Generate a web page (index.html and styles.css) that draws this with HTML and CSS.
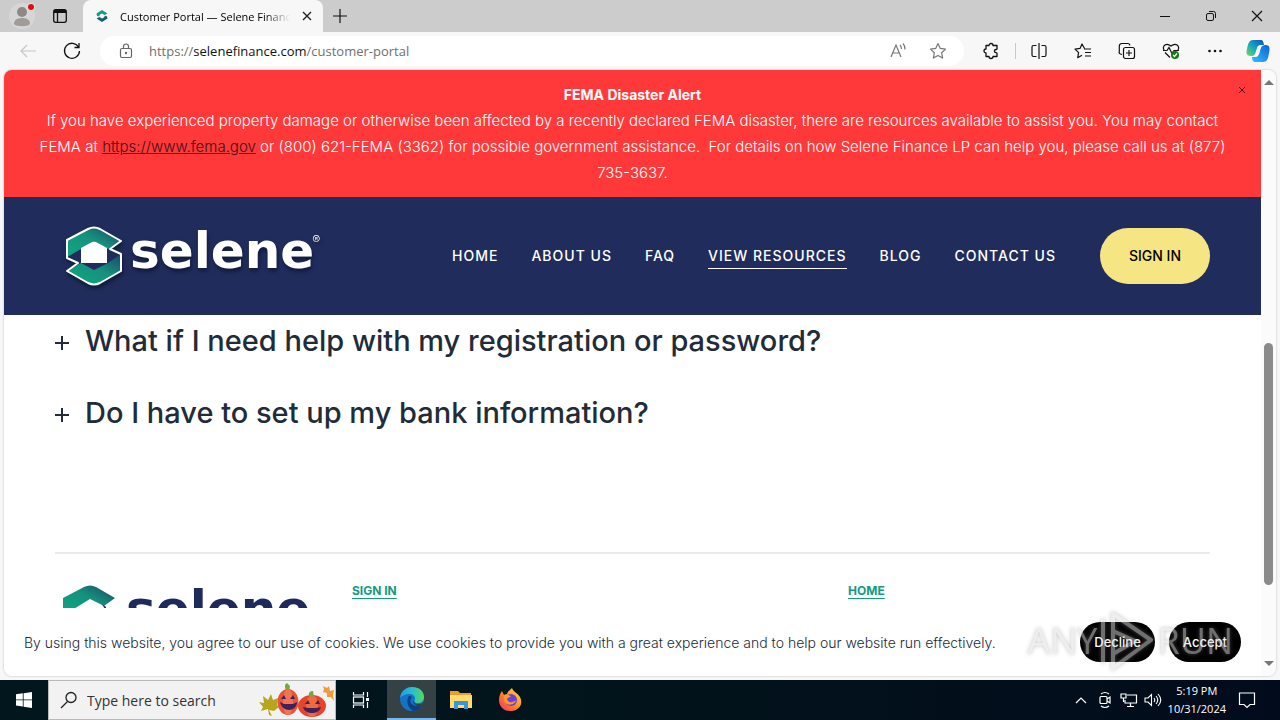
FILE: index.html
```html
<!DOCTYPE html>
<html lang="en">
<head>
<meta charset="utf-8">
<title>Customer Portal — Selene Finance</title>
<link rel="stylesheet" href="styles.css">
</head>
<body>
<div class="tabstrip">
  <button class="profile" aria-label="Profile"><svg width="28" height="28" viewBox="0 0 28 28"><circle cx="14" cy="14" r="13" fill="#d6d6d6"/><circle cx="14" cy="10" r="5" fill="#8d8986"/><path d="M6 22c0-4 3-6 8-6s8 2 8 6c-2 3-14 3-16 0z" fill="#a09c99"/><circle cx="23" cy="5" r="4" fill="#e8dcdc"/><circle cx="23" cy="5" r="3" fill="#e00b13"/></svg></button>
  <button class="tabactions" aria-label="Tab actions"><svg width="16" height="16" viewBox="0 0 16 16" fill="none" stroke="#111" stroke-width="1.3"><rect x="1.7" y="1.7" width="12.6" height="12.6" rx="2"/><path d="M2 3.5h12" stroke-width="3"/><path d="M5.5 4v10"/></svg></button>
  <div class="tab">
    <svg width="14" height="14" viewBox="0 0 14 14"><path d="M1.500 4.500 7 1l5.500 3.500L9.500 6 7 4.500 5 5.500l-1 2L2 7z" fill="#159d80"/><path d="M12.500 9.500 7 13l-5.500-3.500L4.500 8 7 9.500l2-1 1-2 2 1z" fill="#165e72"/></svg>
    <span class="tabtitle">Customer Portal — Selene Finance</span>
    <button aria-label="Close tab"><svg width="12" height="12" viewBox="0 0 12 12" stroke="#222" stroke-width="1.400"><path d="M2 2l8 8M10 2l-8 8"/></svg></button>
  </div>
  <button class="newtab" aria-label="New tab"><svg width="14" height="14" viewBox="0 0 14 14" stroke="#111" stroke-width="1.200"><path d="M7 0v14M0 7h14"/></svg></button>
  <div class="winbuttons">
    <button aria-label="Minimize"><svg width="12" height="12" viewBox="0 0 12 12" stroke="#111"><path d="M1 6.500h10"/></svg></button>
    <button aria-label="Restore"><svg width="12" height="12" viewBox="0 0 12 12" fill="none" stroke="#111"><rect x="1.500" y="3.500" width="7" height="7" rx="1.500"/><path d="M4 1.500h4.500a2 2 0 0 1 2 2V8"/></svg></button>
    <button aria-label="Close"><svg width="12" height="12" viewBox="0 0 12 12" stroke="#111" stroke-width="1.200"><path d="M1 1l10 10M11 1L1 11"/></svg></button>
  </div>
</div>
<div class="toolbar">
  <button aria-label="Back"><svg width="18" height="18" viewBox="0 0 18 18" fill="none" stroke="#c6c6c6" stroke-width="1.200"><path d="M17 9H2M8 3L2 9l6 6"/></svg></button>
  <button aria-label="Refresh"><svg width="18" height="18" viewBox="0 0 18 18" fill="none" stroke="#111" stroke-width="1.300"><path d="M15.500 5A7.500 7.500 0 1 0 16.500 9M16 1v4.500h-4.500"/></svg></button>
  <div class="address">
    <svg width="18" height="18" viewBox="0 0 18 18" fill="none" stroke="#666" stroke-width="1.200"><rect x="3.500" y="6.500" width="11" height="9" rx="1.500"/><path d="M6.500 6V4.500a2.500 2.500 0 0 1 5 0V6"/><circle cx="9" cy="11" r=".6" fill="#666"/></svg>
    <a class="url" href="#">https://<b>selenefinance.com</b>/customer-portal</a>
    <button aria-label="Read aloud"><svg width="18" height="18" viewBox="0 0 18 18" fill="none" stroke="#777" stroke-width="1.200"><path d="M2 15L7 3l5 12M4 11h6M11 3c1 1 1.500 2.500 1.500 4M14 1.500c1.500 1.500 2 3.500 2 6"/></svg></button>
    <button aria-label="Favorite"><svg width="18" height="18" viewBox="0 0 18 18" fill="none" stroke="#777" stroke-width="1.200" stroke-linejoin="round"><path d="M9 1.500l2.300 4.900 5.200.7-3.800 3.700.9 5.300L9 13.500l-4.600 2.600.9-5.300L1.500 7.100l5.200-.7z"/></svg></button>
  </div>
  <div class="tools">
    <button aria-label="Extensions"><svg width="18" height="18" viewBox="0 0 18 18" fill="none" stroke="#111" stroke-width="1.300" stroke-linejoin="round"><path d="M4 3.500h3a2 2 0 0 1 4 0h4V7a1 1 0 0 1-1 .5 1.600 1.600 0 0 0 0 3.200 1 1 0 0 1 1 .5v3.300h-4a2 2 0 0 1-4 0H4V11a2 2 0 1 1 0-4z"/></svg></button>
    <i class="divider"></i>
    <button aria-label="Split screen"><svg width="18" height="18" viewBox="0 0 18 18" fill="none" stroke="#111" stroke-width="1.200"><path d="M9 1v16M6.500 3.500h-3a1.500 1.500 0 0 0-1.500 1.500v8a1.500 1.500 0 0 0 1.500 1.500h3M11.500 3.500h3A1.500 1.500 0 0 1 16 5v8a1.500 1.500 0 0 1-1.500 1.500h-3"/></svg></button>
    <button aria-label="Favorites"><svg width="18" height="18" viewBox="0 0 18 18" fill="none" stroke="#111" stroke-width="1.200" stroke-linejoin="round"><path d="M10.500 6.500L8 2 6 6.400l-5 .7 3.600 3.600-.9 5L8 13.300M10 7h7M11 10.500h6M11 14h6"/></svg></button>
    <button aria-label="Collections"><svg width="18" height="18" viewBox="0 0 18 18" fill="none" stroke="#111" stroke-width="1.200"><path d="M4 12.500L2.500 12a2 2 0 0 1-1.200-2.500V4a2.500 2.500 0 0 1 2.500-2.500h6a2 2 0 0 1 2 2"/><rect x="5.500" y="5.500" width="11" height="11" rx="2"/><path d="M11 8v6M8 11h6"/></svg></button>
    <button aria-label="Browser essentials"><svg width="18" height="18" viewBox="0 0 18 18" fill="none" stroke="#111" stroke-width="1.200"><path d="M2 8C0 4 4 0 9 4c5-4 9 0 7 4M3 10.500l5 5M1 8.500h4l2-3 3 6 2-3h5"/><circle cx="13" cy="13" r="4" fill="#107c10" stroke="none"/><path d="M11 13l1.500 1.500 2.500-3" stroke="#fff"/></svg></button>
    <button aria-label="More"><svg width="18" height="18" viewBox="0 0 18 18" fill="#111"><circle cx="3.500" cy="9" r="1.300"/><circle cx="9" cy="9" r="1.300"/><circle cx="14.500" cy="9" r="1.300"/></svg></button>
    <button class="copilot" aria-label="Copilot"><svg width="26" height="26" viewBox="0 0 26 26"><defs><linearGradient id="cp1" x1="0" y1="1" x2="1" y2="0"><stop offset="0" stop-color="#7bd65c"/><stop offset=".45" stop-color="#18a9bd"/><stop offset="1" stop-color="#0a50c0"/></linearGradient><linearGradient id="cp2" x1="0" y1="1" x2="1" y2="0"><stop offset="0" stop-color="#35c0fa"/><stop offset="1" stop-color="#0b5fdc"/></linearGradient></defs><path d="M8 2h8c2 0 2.500 2 3 5h-4c-2 0-3 2-4 6-1 4-2 5-5 5-5 0-5-3-4-7 1-5 2-9 6-9z" fill="url(#cp1)"/><path d="M18 24h-8c-2 0-3-2-3-5h3c3 0 4-2 5-6s2-6 6-6c4 0 4 4 3 8-1 6-2 9-6 9z" fill="url(#cp2)"/></svg></button>
  </div>
</div>
<div class="page">
  <div class="site">
    <section class="alert">
      <p><strong>FEMA Disaster Alert</strong><br>If you have experienced property damage or otherwise been affected by a recently declared FEMA disaster, there are resources available to assist you. You may contact FEMA at <a href="#">https://www.fema.gov</a> or (800) 621-FEMA (3362) for possible government assistance.&nbsp; For details on how Selene Finance LP can help you, please call us at (877) 735-3637.</p>
      <button class="dismiss" aria-label="Dismiss"><svg width="8" height="8" viewBox="0 0 8 8" stroke="#4a1518"><path d="M1 1l6 6M7 1L1 7"/></svg></button>
    </section>
    <header class="siteheader">
      <a class="brand" href="#">
        <svg width="58" height="60" viewBox="0 0 58 60"><defs><linearGradient id="g1" x1="0" y1="1" x2="1" y2="0"><stop offset="0" stop-color="#0ea883"/><stop offset=".55" stop-color="#15917d"/><stop offset="1" stop-color="#1c4668"/></linearGradient></defs>
          <path d="M2 14 23 3Q29 0 35 3L56 15 45 23 56 28V45L35 57Q29 60 23 57L2 45 13 37 2 32z" fill="#202d5c"/><path d="M2 31V14L23 3Q29 0 35 3L56 15 43 23 29 15 16 23z" fill="url(#g1)"/><path d="M56 28V45L35 57Q29 60 23 57L2 45 16 37 29 44 43 37z" fill="url(#g1)"/><path d="M2 14 23 3Q29 0 35 3L56 15 45 23 56 28V45L35 57Q29 60 23 57L2 45 13 37 2 32z" fill="none" stroke="#fff" stroke-width="2" stroke-linejoin="round"/><path d="M16 37V22L27 16Q29 15 31 16L42 22V37z" fill="#fff"/></svg>
        <span class="wordmark">selene</span><sup>®</sup>
      </a>
      <nav class="nav"><a href="#">HOME</a><a href="#">ABOUT US</a><a href="#">FAQ</a><a class="current" href="#">VIEW RESOURCES</a><a href="#">BLOG</a><a href="#">CONTACT US</a></nav>
      <a class="signin" href="#">SIGN IN</a>
    </header>
    <main class="main">
      <div class="faq">
        <button><span class="plus"></span>What if I need help with my registration or password?</button>
        <button><span class="plus"></span>Do I have to set up my bank information?</button>
      </div>
      <footer class="footer">
        <a class="brand" href="#">
          <svg width="58" height="60" viewBox="0 0 58 60"><path d="M2 31V14L23 3Q29 0 35 3L54 14 43 22 29 15 16 23z" fill="url(#g1)"/><path d="M41 20l4 3v4z" fill="#202d5c"/><path d="M56 28V45L35 57Q29 60 23 57L2 45 16 37 29 44 43 37z" fill="url(#g1)"/></svg>
          <span class="wordmark">selene</span>
        </a>
        <a class="flink" href="#">SIGN IN</a>
        <a class="flink" href="#">HOME</a>
      </footer>
    </main>
    <div class="cookies">
      <p>By using this website, you agree to our use of cookies. We use cookies to provide you with a great experience and to help our website run effectively.</p>
      <button>Decline</button><button>Accept</button>
      <div class="watermark"><span>ANY</span><svg width="54" height="62" viewBox="0 0 54 62" fill="none" stroke="#ddd" stroke-width="4" stroke-linejoin="round"><path d="M3 9v44M13 21V4l38 26-38 28V44M13 21l22 10-22 13z"/></svg><span>RUN</span></div>
    </div>
  </div>
  <div class="scrollbar"><i class="up"></i><i class="thumb"></i><i class="down"></i></div>
</div>
<div class="taskbar">
  <button class="start" aria-label="Start"><svg width="16" height="16" viewBox="0 0 16 16" fill="#fff"><path d="M0 2.300l6.800-1v6.200H0zM7.600 1.200L16 0v7.500H7.600zM0 8.300h6.800v6.300l-6.800-1zM7.600 8.300H16V16l-8.400-1.200z"/></svg></button>
  <label class="search">
    <svg width="18" height="18" viewBox="0 0 18 18" fill="none" stroke="#222" stroke-width="1.300"><circle cx="11" cy="6.500" r="5"/><path d="M7.500 10.500L1 17"/></svg>
    <input type="text" placeholder="Type here to search" aria-label="Type here to search">
    <svg width="76" height="36" viewBox="0 0 76 36"><path d="M10 33l-1-6-7 2 2-4-4-5 5 1-1-7 5 4 3-6 2 6 5-2-1 7 2 2-5 4-5-1 3 6z" fill="#b7a51e"/><path d="M64 4l4 2 2-2 1 5 4-1-1 5 1 6-3-4-4 0 0-4-4-1 1-3z" fill="#f19a36"/><path d="M27 9c-1-4-2-6 1-8l3 3-1 6z" fill="#76a93d"/><ellipse cx="29" cy="20" rx="10.500" ry="13" fill="#e95336"/><ellipse cx="29" cy="20" rx="5" ry="13" fill="#f27552"/><ellipse cx="53" cy="24" rx="14" ry="11" fill="#e5452d"/><ellipse cx="53" cy="24" rx="6" ry="11" fill="#f06a3d"/><path d="M50 14c-1-3 1-5 4-5l1 6z" fill="#76a93d"/><path d="M22 17l3-4 2 4zM31 17l3-4 2 4zM21 20l4 2h9l4-2c0 5-4 8-8 8s-8-3-9-8zM46 22l3-4 2 4zM56 22l3-4 2 4zM44 25l5 1h8l5-1c-1 4-5 6-9 6s-8-2-9-6z" fill="#41215c"/></svg>
  </label>
  <button aria-label="Task view"><svg width="18" height="18" viewBox="0 0 18 18" fill="none" stroke="#fff" stroke-width="1.200"><path d="M1.500 1v3h10V1M1.500 17v-3h10v3M15.500 1v5M15.500 11v6"/><rect x="1.500" y="6" width="10" height="6"/><path d="M14 8.500h3" stroke-width="3"/></svg></button>
  <button class="active" aria-label="Microsoft Edge"><svg width="26" height="26" viewBox="0 0 26 26"><defs><linearGradient id="e1"><stop offset="0" stop-color="#1f9fe5"/><stop offset=".5" stop-color="#28bcd0"/><stop offset="1" stop-color="#5bd75a"/></linearGradient></defs><circle cx="13" cy="13" r="12" fill="#1473c5"/><path d="M1 12C2 5 7 1 13 1c7 0 12 4 12 10 0 4-3 6-6 6-4 0-4-2-3-4 0-3-2-5-6-5-5 0-8 3-9 4z" fill="url(#e1)"/><path d="M10 10c-3 4-2 11 4 15 4 0 8-3 9-6-5 2-9 1-11-2-1-2-1-4 1-6-1-1-2-1-3-1z" fill="#0c3f83"/><path d="M15 13c-1 3 1 5 4 5 2 0 4 0 6-2v3l-2 1c-4 1-8-1-9-4z" fill="#344245"/></svg></button>
  <button aria-label="File Explorer"><svg width="22" height="20" viewBox="0 0 22 20"><path d="M0 1h8l2 2h11v15H0z" fill="#e8a127"/><path d="M0 5h22v13H0z" fill="#ffdc72"/><path d="M4 19v-8h14v8h-4v-4H8v4z" fill="#3d96d2"/></svg></button>
  <button aria-label="Firefox"><svg width="24" height="24" viewBox="0 0 24 24"><defs><linearGradient id="f1" x1="1" y1="0" x2="0" y2="1"><stop offset="0" stop-color="#ffe238"/><stop offset=".5" stop-color="#ff8b23"/><stop offset="1" stop-color="#f12b70"/></linearGradient></defs><path d="M12 23C5 23 1 18 1 12c0-4 1-6 3-9l2 4 3-1c1-3 3-4 5-6 1 4 6 5 8 9 4 8-2 14-10 14z" fill="url(#f1)"/><circle cx="13" cy="12" r="6" fill="#6d40d9"/><path d="M6 7c4-1 5 0 7 2-2 0-3 1-4 2 1 4 6 4 9 1-1 5-9 7-12 1z" fill="#ff9827"/></svg></button>
  <div class="tray">
    <svg width="18" height="14" viewBox="0 0 14 14" fill="none" stroke="#fff" stroke-width="1.200"><path d="M2 10l5-5 5 5"/></svg>
    <svg width="18" height="18" viewBox="0 0 14 18" fill="none" stroke="#fff" stroke-width="1.200"><rect x="2" y="5.500" width="7" height="7" rx="1"/><path d="M9 8l3-2v6l-3-2M3 3q4-3 8 0M3 15q4 3 8 0"/></svg>
    <svg width="18" height="16" viewBox="0 0 18 16" fill="none" stroke="#fff" stroke-width="1.200"><path d="M7 3h9.500v8H5V8M10.500 11v3M7 14.500h7M1 2h5v4H1zM3.500 6v4"/></svg>
    <svg width="18" height="16" viewBox="0 0 18 16" fill="none" stroke="#fff" stroke-width="1.100"><path d="M1 6h3l3.500-3.500v11L4 10H1zM10 6q1.500 2 0 4M12 4q3.500 4 0 8M14 2q5.500 6 0 12"/></svg>
    <div class="clock"><span>5:19 PM</span><span>10/31/2024</span></div>
    <svg class="notice" width="18" height="18" viewBox="0 0 18 18" fill="none" stroke="#fff" stroke-width="1.200"><path d="M1.500 2h15v11.500H12L9 16.500l-3-3H1.500z"/></svg>
  </div>
</div>
</body>
</html>
```
FILE: styles.css
```css
* { box-sizing: border-box; }
body { margin: 0; height: 100vh; display: flex; flex-direction: column; background: #f7f7f7; font-family: "Open Sans", "Noto Sans", sans-serif; overflow: hidden; }
button { border: 0; padding: 0; background: none; font: inherit; color: inherit; display: flex; align-items: center; justify-content: center; flex: none; }
svg { display: block; flex: none; }
a { color: inherit; }
p { margin: 0; }

.tabstrip { height: 32px; display: flex; align-items: center; background: #cccccc; flex: none; }
.profile { width: 44px; }
.tabactions { width: 32px; }
.tab { align-self: stretch; width: 240px; margin-left: 7px; padding: 0 10px 0 12px; display: flex; align-items: center; gap: 11px; background: #f7f7f7; border-radius: 8px 8px 0 0; font-size: 11px; }
.tabtitle { flex: 1; overflow: hidden; white-space: nowrap; -webkit-mask-image: linear-gradient(90deg, #000 85%, transparent); mask-image: linear-gradient(90deg, #000 85%, transparent); }
.newtab { width: 34px; }
.winbuttons { margin-left: auto; display: flex; }
.winbuttons button { width: 46px; height: 32px; }

.toolbar { height: 38px; display: flex; align-items: center; padding: 0 9px 0 6px; flex: none; }
.toolbar > button { width: 44px; }
.address { flex: 1; height: 30px; margin-left: 6px; padding: 0 17px; border-radius: 15px; background: #fff; display: flex; align-items: center; gap: 22px; }
.address .url { flex: 1; margin-left: -8px; font-size: 13px; color: #707070; text-decoration: none; }
.url b { font-weight: 400; color: #111; }
.tools { display: flex; align-items: center; gap: 26px; padding-left: 18px; }
.divider { width: 1px; height: 16px; background: #c8c8c8; margin: 0 -12px 0 -11px; }
.copilot { margin-left: -5px; }

.page { flex: 1; min-height: 0; margin: 0 4px 4px; display: flex; border-radius: 8px; background: #fff; overflow: hidden; box-shadow: 0 0 2px #aaa; }
.site { flex: 1; min-width: 0; display: flex; flex-direction: column; font-family: Inter, "Open Sans", sans-serif; color: #222b38; }
.alert { position: relative; flex: none; padding: 12px 30px 11px; background: #ff393a; color: #fff; text-align: center; font-size: 15px; font-weight: 300; line-height: 26px; }
.alert a { color: #3b1018; }
.alert strong { font-size: 14px; font-weight: 700; }
.dismiss { position: absolute; right: 15px; top: 16px; }
.siteheader { flex: none; display: flex; align-items: center; height: 118px; padding: 0 51px; background: #202d5c; color: #fff; }
.brand { display: flex; align-items: center; gap: 7px; text-decoration: none; }
.siteheader .brand { padding-left: 10px; filter: drop-shadow(1px 3px 2px #101838); }
.wordmark { font-family: "DejaVu Sans", sans-serif; font-weight: 700; font-size: 50px; line-height: 60px; margin-top: -10px; }
.brand sup { font-size: 12px; line-height: 12px; font-weight: 300; margin: -32px 0 0 -9px; }
.nav { margin-left: auto; display: flex; gap: 33px; font-size: 14px; font-weight: 500; line-height: 24px; letter-spacing: 1px; white-space: nowrap; }
.nav a { text-decoration: none; border-bottom: 1px solid transparent; }
.nav .current { border-color: #fff; }
.signin { margin-left: 44px; padding: 16px 29px; border-radius: 28px; background: #f6e683; color: #000; font-size: 14px; line-height: 24px; font-weight: 500; text-decoration: none; white-space: nowrap; }

.main { flex: 1; min-height: 0; overflow: hidden; padding: 0 51px; }
.faq { padding: 8px 0 121px; display: flex; flex-direction: column; align-items: flex-start; gap: 36px; }
.faq button { gap: 16px; font-size: 29px; line-height: 36px; font-weight: 500; white-space: nowrap; }
.plus { width: 14px; height: 14px; margin-top: 4px; background: linear-gradient(#222b38, #222b38) center / 14px 2px no-repeat, linear-gradient(#222b38, #222b38) center / 2px 14px no-repeat; }
.footer { border-top: 2px solid #e9eaeb; padding-top: 30px; display: grid; grid-template-columns: 297px 496px 1fr; align-items: start; }
.footer .brand { color: #1e295c; padding-left: 6px; }
.flink { justify-self: start; font-size: 12px; line-height: 14px; font-weight: 700; color: #129b80; text-underline-offset: 3px; }

.cookies { position: relative; flex: none; height: 68px; padding: 0 20px; display: flex; align-items: center; gap: 14px; background: #fff; font-size: 14px; font-weight: 300; }
.cookies p { flex: 1; white-space: nowrap; }
.cookies button { height: 40px; padding: 0 14px; border-radius: 20px; background: #000; color: #fff; font-size: 13px; font-weight: 500; }
.watermark { position: absolute; right: 28px; bottom: 4px; display: flex; align-items: center; gap: 3px; color: #ddd; font: 400 36px/62px "Open Sans", sans-serif; opacity: .5; filter: drop-shadow(0 0 2px #888); pointer-events: none; }
.scrollbar { width: 15px; flex: none; position: relative; background: #fbfbfb; display: flex; flex-direction: column; align-items: center; justify-content: space-between; padding: 10px 0; }
.up, .down { border: 5px solid transparent; }
.up { border-top: 0; border-bottom-color: #777; }
.down { border-bottom: 0; border-top-color: #777; }
.thumb { position: absolute; top: 45%; height: 40%; width: 9px; border-radius: 5px; background: #8b8b8b; }

.taskbar { height: 40px; flex: none; display: flex; background: linear-gradient(90deg, #01171d, #02121b 60%, #020b1c); color: #fff; }
.taskbar > button { width: 49px; }
.taskbar .start { width: 48px; }
.taskbar .active { margin-left: 2px; background: #344245; border-bottom: 2px solid #76b9ed; }
.search { width: 288px; border: 1px solid #b9b9b9; background: #f2f2f2; display: flex; align-items: center; padding-left: 11px; }
.search input { flex: 1; min-width: 0; margin-left: 9px; padding: 0; border: 0; background: none; font: 14px "Open Sans", sans-serif; }
.search input::placeholder { color: #333; opacity: 1; }
.tray { margin-left: auto; display: flex; align-items: center; gap: 6px; padding-right: 24px; }
.clock { display: flex; flex-direction: column; align-items: center; font-size: 11px; line-height: 18px; }
.notice { margin-left: 6px; }
```
